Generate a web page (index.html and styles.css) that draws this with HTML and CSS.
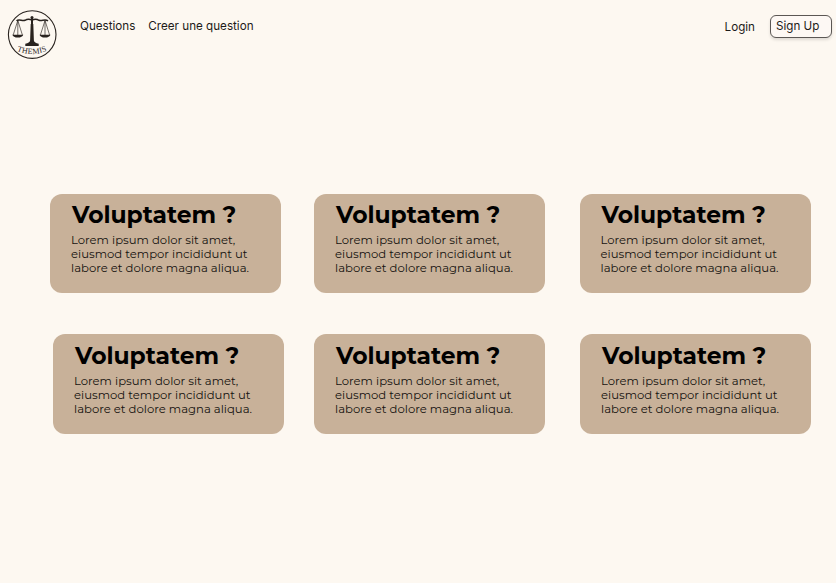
FILE: index.html
```html
<!DOCTYPE html>
<html lang="fr">
<head>
<meta charset="utf-8">
<title>Themis</title>
<link rel="stylesheet" href="styles.css">
</head>
<body>
<header class="header">
  <a class="logo" aria-label="Themis">
    <svg width="50" height="50" viewBox="0 0 50 50" fill="none" stroke="#29231f">
      <circle cx="25.2" cy="24.6" r="23.8" stroke-width="1.1"/>
      <path d="M9.500 10.800C12 8.500 15 11.300 18 10.300Q21 8.500 25 10Q29 8.500 32 10.300C35 11.300 38 8.500 41 10.800" stroke-width="1.500"/>
      <path d="M25 7V33" stroke-width="2"/>
      <circle cx="25" cy="7.500" r="1.500" fill="#29231f" stroke="none"/>
      <path d="M23.700 14h2.600l.6 16.500q.5 2.500 4.800 3.300v2.200h-13.400v-2.200q4.300-.8 4.800-3.300z" fill="#29231f" stroke="none"/>
      <path d="M10.800 10.500L6.200 25M10.800 10.500V25M10.800 10.500L15.400 25M38 10.500L33.400 25M38 10.500V25M38 10.500L42.600 25" stroke-width=".65"/>
      <path d="M5.300 24.800h11q-1 2.800-5.500 2.800t-5.500-2.800zM32.500 24.800h11q-1 2.800-5.500 2.800t-5.500-2.800z" fill="#29231f" stroke="none"/>
      <path id="name-arc" d="M8.500 40Q25 48 41.500 40" stroke="none"/>
      <text class="logo-name"><textPath href="#name-arc" startOffset="50%" text-anchor="middle">THEMIS</textPath></text>
    </svg>
  </a>
  <nav class="nav">
    <a>Questions</a>
    <a>Creer une question</a>
  </nav>
  <div class="account">
    <a class="login">Login</a>
    <button class="signup">Sign Up</button>
  </div>
</header>
<main class="board">
  <section class="row row-first">
    <article class="card"><h2>Voluptatem ?</h2><p>Lorem ipsum dolor sit amet,<br>eiusmod tempor incididunt ut<br>labore et dolore magna aliqua.</p></article>
    <article class="card"><h2>Voluptatem ?</h2><p>Lorem ipsum dolor sit amet,<br>eiusmod tempor incididunt ut<br>labore et dolore magna aliqua.</p></article>
    <article class="card"><h2>Voluptatem ?</h2><p>Lorem ipsum dolor sit amet,<br>eiusmod tempor incididunt ut<br>labore et dolore magna aliqua.</p></article>
  </section>
  <section class="row row-second">
    <article class="card"><h2>Voluptatem ?</h2><p>Lorem ipsum dolor sit amet,<br>eiusmod tempor incididunt ut<br>labore et dolore magna aliqua.</p></article>
    <article class="card"><h2>Voluptatem ?</h2><p>Lorem ipsum dolor sit amet,<br>eiusmod tempor incididunt ut<br>labore et dolore magna aliqua.</p></article>
    <article class="card"><h2>Voluptatem ?</h2><p>Lorem ipsum dolor sit amet,<br>eiusmod tempor incididunt ut<br>labore et dolore magna aliqua.</p></article>
  </section>
</main>
</body>
</html>
```

FILE: styles.css
```css
* { box-sizing: border-box; }
body {
  margin: 0;
  min-height: 583px;
  background: #fdf8f1;
  color: #1d1b19;
  font-family: Inter, sans-serif;
}
.header {
  display: flex;
  align-items: flex-start;
  height: 70px;
  padding: 10px 4px 0 7px;
  font-size: 11.65px;
  line-height: 16px;
}
.logo { width: 50px; height: 50px; }
.logo svg { display: block; }
.logo-name {
  fill: #29231f;
  stroke: none;
  font: 8px "Liberation Serif", serif;
  letter-spacing: .25px;
}
.nav {
  display: flex;
  gap: 13px;
  margin: 8px 0 0 23px;
}
.account {
  display: flex;
  margin-left: auto;
}
.login { margin: 9px 15px 0 0; }
.signup {
  width: 62px;
  height: 23px;
  margin-top: 5px;
  padding: 0 6px 2px 5px;
  border: 1px solid #5b5754;
  border-radius: 6px;
  background: #fdf8f4;
  box-shadow: 0 2px 3px rgba(0, 0, 0, .12);
  color: inherit;
  font: 11.65px/16px Inter, sans-serif;
  text-align: left;
  white-space: nowrap;
}
.board {
  display: flex;
  flex-direction: column;
  gap: 41px;
  padding-top: 124px;
}
.row { display: grid; height: 99.4px; }
.row-first {
  grid-template-columns: 264px 265.5px 231.5px;
  margin-left: 50px;
}
.row-second {
  grid-template-columns: 261px 266px 231.5px;
  margin-left: 53px;
}
.row-second h2 { padding-top: .3px; }
.card {
  width: 231.4px;
  padding: 7px 0 0 21px;
  border-radius: 12px;
  background: #c8b199;
}
.card h2 {
  margin: 0 0 0 1px;
  color: #000;
  font: 700 23.4px/28px Montserrat, Inter, sans-serif;
  white-space: nowrap;
}
.card p {
  margin: 4px 0 0;
  color: #15120f;
  font: 400 11.65px/14px Montserrat, Inter, sans-serif;
  white-space: nowrap;
}
```
